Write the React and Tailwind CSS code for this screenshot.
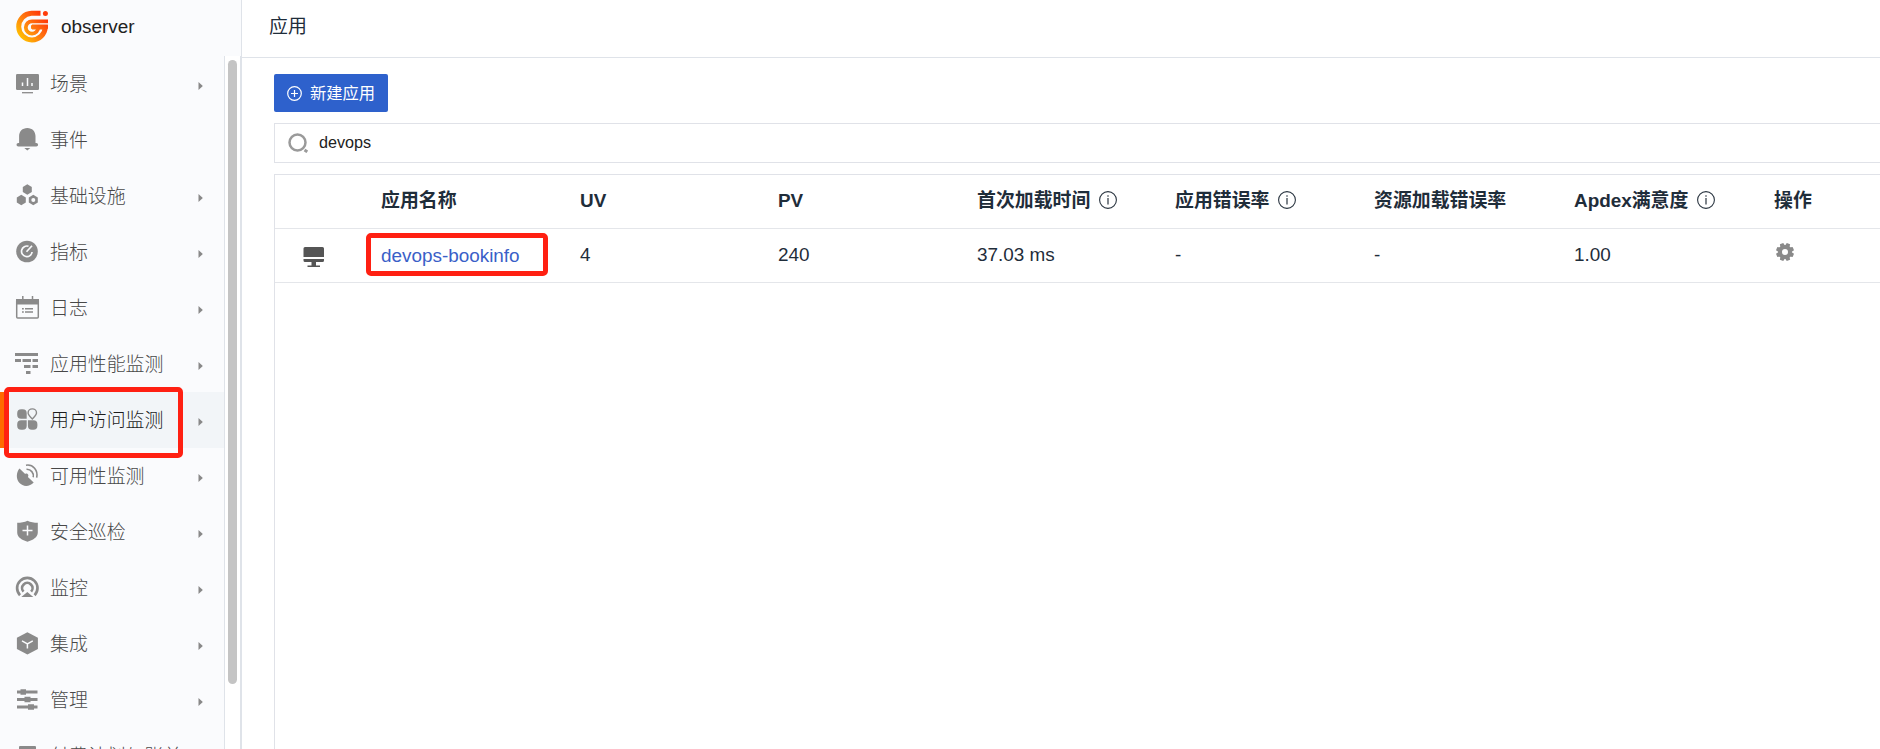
import React from "react";

const G = "#8a8a8a";
const BG = "#fafbfd";

const hex = (cx, cy, r) =>
  [0, 1, 2, 3, 4, 5]
    .map((i) => {
      const a = (Math.PI / 3) * i - Math.PI / 2;
      return `${(cx + r * Math.cos(a)).toFixed(2)},${(cy + r * Math.sin(a)).toFixed(2)}`;
    })
    .join(" ");

const icons = {
  scene: (
    <>
      <rect x="1" y="2" width="23" height="16" rx="1.2" fill={G} />
      <path d="M7.500 14v-3.500M12.500 14V6M17 14v-3" stroke={BG} strokeWidth="1.500" />
      <path d="M7 20.700h11" stroke={G} strokeWidth="1.300" />
    </>
  ),
  bell: (
    <path
      fill={G}
      d="M12.300 0c5 0 8.200 3.600 8.200 8v7h.8a1.800 1.800 0 0 1 0 3.600H3.300a1.800 1.800 0 0 1 0-3.600h.8V8c0-4.400 3.200-8 8.200-8zM9.300 20h6l-3 2.600z"
    />
  ),
  infra: (
    <>
      <polygon points={hex(12.300, 5.500, 5.200)} fill={G} />
      <polygon points={hex(6.300, 16, 5.200)} fill={G} />
      <polygon points={hex(18.300, 16, 5.200)} fill={G} />
      <circle cx="18.300" cy="16" r="2" fill={BG} />
    </>
  ),
  metric: (
    <>
      <circle cx="12" cy="11.500" r="10.800" fill={G} />
      <path d="M13.500 6.300a5.300 5.300 0 1 0 3.600 5.700M11.500 11.800l5.500-6" fill="none" stroke={BG} strokeWidth="1.700" />
    </>
  ),
  log: (
    <>
      <rect x="1.700" y="3.700" width="21.600" height="18.300" rx="1" fill="none" stroke={G} strokeWidth="1.500" />
      <path d="M1 3h23v5.500H1z" fill={G} />
      <path d="M7.800 0v4M17.500 0v4" stroke={G} strokeWidth="1.500" />
      <path d="M7 12.800h1.800M10 12.800h8M7 16h1.800M10 16h8" stroke={G} strokeWidth="1.400" />
    </>
  ),
  apm: (
    <path
      fill={G}
      d="M0 1h23v3H0zM0 7h6v3H0zM7.500 7H16v3H7.500zM17.500 7H23v3h-5.500zM9 13h6.500v3H9zM17.500 13H23v3h-5.500zM11 19h4.500v3H11z"
    />
  ),
  rum: (
    <>
      <path
        fill={G}
        d="M11.700 10.800H6.200a4 4 0 0 1-4-4V5.200a4 4 0 0 1 4-4h1.500a4 4 0 0 1 4 4zM11.700 12.300v5.500a4 4 0 0 1-4 4H6.200a4 4 0 0 1-4-4v-1.500a4 4 0 0 1 4-4zM12.900 12.300h5.500a4 4 0 0 1 4 4v1.500a4 4 0 0 1-4 4h-1.500a4 4 0 0 1-4-4z"
      />
      <path
        d="M17.300.9c2.400 0 4.200 1.800 4.200 4 0 2-1.800 3.500-4.200 6-2.400-2.500-4.200-4-4.200-6 0-2.200 1.800-4 4.200-4z"
        fill="none"
        stroke={G}
        strokeWidth="1.400"
      />
    </>
  ),
  dish: (
    <>
      <path fill={G} d="M4.500 4.500l5.700 5.500c1.500-1.500 4.300.8 2.700 3l5.800 5.500C14.500 23 8 23 4.300 18.800 1 15 1 8.500 4.500 4.500z" />
      <path d="M11.500 5.300a6.500 6.500 0 0 1 6.700 8M11 1.200c7-1.200 12.300 5 10.700 12.500" fill="none" stroke={G} strokeWidth="1.600" />
    </>
  ),
  shield: (
    <>
      <path fill={G} d="M12.500.7c3 1.500 6.500 2 10.300 2v9.800c0 5-5 7.500-10.300 9.300C7.200 20 2.200 17.500 2.200 12.500V2.700C6 2.700 9.500 2.200 12.500.7z" />
      <path d="M12.500 5.500v10M7.500 10.500h10" stroke={BG} strokeWidth="1.500" />
    </>
  ),
  monitor: (
    <>
      <path d="M5 19.200a10.200 10.200 0 1 1 14.600 0" fill="none" stroke={G} strokeWidth="2.700" />
      <path d="M8.500 15.700a5.200 5.200 0 1 1 7.600 0" fill="none" stroke={G} strokeWidth="2.700" />
      <path d="M12.300 16l6 5H6.300z" fill={G} />
    </>
  ),
  cube: (
    <>
      <polygon points="12.400,0.300 22.900,5.700 22.900,17 12.400,22.500 1.900,17 1.900,5.700" fill={G} />
      <path d="M7 8.800l5.400 3 5.400-3M12.400 11.800v4.700" fill="none" stroke={BG} strokeWidth="1.500" />
    </>
  ),
  manage: (
    <>
      <path d="M2 4h20.500M2 11.500h20.500M2 19h20.500" stroke={G} strokeWidth="3" />
      <path d="M5.500 1.200h5.500v5.600H5.500zM9.500 8.700h6v5.600h-6zM13 16.200h6v5.600h-6z" fill={G} />
    </>
  ),
  bill: <path d="M5 2h15a1 1 0 0 1 1 1v18H4V3a1 1 0 0 1 1-1z" fill={G} />,
};

const menu = [
  ["scene", "场景", true],
  ["bell", "事件", false],
  ["infra", "基础设施", true],
  ["metric", "指标", true],
  ["log", "日志", true],
  ["apm", "应用性能监测", true],
  ["rum", "用户访问监测", true],
  ["dish", "可用性监测", true],
  ["shield", "安全巡检", true],
  ["monitor", "监控", true],
  ["cube", "集成", true],
  ["manage", "管理", true],
  ["bill", "付费计划与账单", false],
];

function Logo() {
  return (
    <svg className="h-[34px] w-[34px]" viewBox="0 0 34 34" fill="none">
      <defs>
        <linearGradient id="lg" x1="4" y1="29" x2="30" y2="6" gradientUnits="userSpaceOnUse">
          <stop stopColor="#ffc800" />
          <stop offset="0.500" stopColor="#ff7a10" />
          <stop offset="1" stopColor="#ff3408" />
        </linearGradient>
      </defs>
      <path d="M25.500 3.300H16.500a13.300 13.300 0 1 0 13.800 13.700H17" stroke="url(#lg)" strokeWidth="5" />
      <path d="M33 11.300H17a6.200 6.200 0 1 0 6.200 6" stroke="url(#lg)" strokeWidth="3.800" />
      <path d="M16 17h17" stroke="url(#lg)" strokeWidth="3.600" />
      <circle cx="30.400" cy="3.400" r="2.500" fill="#ff3c0a" />
    </svg>
  );
}

function Info() {
  return (
    <svg className="mb-[2px] ml-[9px] h-[18px] w-[18px]" viewBox="0 0 18 18" fill="none">
      <circle cx="9" cy="9" r="8.400" stroke="#2a3540" strokeWidth="1.100" />
      <path d="M9 7v6.500M9 4.200v1.500" stroke="#2a3540" strokeWidth="1.200" />
    </svg>
  );
}

function Gear() {
  const teeth = [0, 45, 90, 135, 180, 225, 270, 315];
  return (
    <svg className="mb-[8px] ml-[2px] h-[18px] w-[18px]" viewBox="0 0 18 18">
      {teeth.map((a) => (
        <path key={a} d="M6.500 3.500 7.200 0h3.600l.7 3.500z" fill="#8a8a8a" transform={`rotate(${a + 22.5} 9 9)`} />
      ))}
      <circle cx="9" cy="9" r="5" fill="none" stroke="#8a8a8a" strokeWidth="4" />
    </svg>
  );
}

const cols = [
  ["UV", "4", false],
  ["PV", "240", false],
  ["首次加载时间", "37.03 ms", true],
  ["应用错误率", "-", true],
  ["资源加载错误率", "-", false],
  ["Apdex满意度", "1.00", true],
];

const grid =
  "grid grid-cols-[106px_199px_198px_199px_198px_199px_200px_200px_1fr] items-center border-b border-[#e4e6ea]";

export default function App() {
  return (
    <div className="flex h-[749px] w-[1880px] overflow-hidden bg-white font-['Liberation_Sans','Noto_Sans_CJK_SC',sans-serif] text-[18.9px] text-[#1f2d3a]">
      <aside className="flex w-[242px] shrink-0 flex-col">
        <div className="flex h-[56px] items-center border-r border-[#dfe3e9] bg-[#fafbfd] pb-[2px] pl-[15px]">
          <Logo />
          <span className="ml-[12px] text-[#222]">observer</span>
        </div>
        <div className="flex min-h-0 flex-1 border-r-2 border-[#dfe3e9]">
          <nav className="w-[225px] overflow-hidden border-r border-[#dfe3e9] bg-[#fafbfd]">
            {menu.map(([icon, label, arrow]) => {
              const active = icon === "rum";
              return (
                <div
                  key={icon}
                  className={
                    active
                      ? "relative flex h-[56px] items-center border-l-4 border-[#ff6a00] bg-[#f2f5f8] pl-[11px] text-[#1c1c1c]"
                      : "flex h-[56px] items-center pl-[15px] text-[#484848]"
                  }
                >
                  <svg className="h-[24px] w-[24px] overflow-visible" viewBox="0 0 24 24">
                    {icons[icon]}
                  </svg>
                  <span className="mt-[2px] ml-[11px] font-light whitespace-nowrap">{label}</span>
                  {arrow && (
                    <svg className="mt-[4px] mr-[21px] ml-auto h-[8px] w-[5px]" viewBox="0 0 5 8">
                      <path d="M0.500 0l4.300 4-4.300 4z" fill="#888" />
                    </svg>
                  )}
                  {active && (
                    <div className="absolute -top-[5px] left-0 h-[71px] w-[179px] rounded-[5px] border-[5px] border-[#ff2012]" />
                  )}
                </div>
              );
            })}
          </nav>
          <div className="flex-1 bg-white pt-[4px] pl-[3px]">
            <div className="h-[624px] w-[9px] rounded-full bg-[#c4c4c4]" />
          </div>
        </div>
      </aside>

      <main className="flex min-w-0 flex-1 flex-col">
        <header className="flex h-[58px] shrink-0 items-center border-b border-[#dfe3e9] pb-[3px] pl-[27px]">应用</header>
        <div className="flex min-h-0 flex-1 flex-col pt-[16px] pl-[32px]">
          <button className="flex h-[38px] w-[114px] shrink-0 items-center rounded-[2px] bg-[#2e61cc] pl-[13px] text-[16.3px] text-white">
            <svg className="mr-[8px] h-[15px] w-[15px]" viewBox="0 0 15 15" fill="none" stroke="#fff" strokeWidth="1.200">
              <circle cx="7.500" cy="7.500" r="6.800" />
              <path d="M7.500 4v7M4 7.500h7" />
            </svg>
            新建应用
          </button>
          <div className="mt-[11px] flex h-[40px] shrink-0 items-center border border-r-0 border-[#e0e2e8] pb-[1px] pl-[13px] text-[16.200px] text-[#222]">
            <svg className="mr-[11px] h-[20px] w-[20px]" viewBox="0 0 20 20" fill="none" stroke="#9a9a9a">
              <circle cx="9.500" cy="9.500" r="8" strokeWidth="2.500" />
              <path d="M16.500 17l2.800 1.800" strokeWidth="3" />
            </svg>
            devops
          </div>
          <div className="mt-[11px] min-h-0 flex-1 border-t border-l border-[#e0e2e8]">
            <div className={`${grid} h-[54px] font-bold`}>
              <span />
              <span>应用名称</span>
              {cols.map(([h, , info]) => (
                <span key={h} className="flex items-center whitespace-nowrap">
                  {h}
                  {info && <Info />}
                </span>
              ))}
              <span>操作</span>
            </div>
            <div className={`${grid} h-[54px]`}>
              <svg className="mt-[3px] ml-[28px] h-[21px] w-[22px]" viewBox="0 0 22 21" fill="#555">
                <path d="M2 0h17.500a1.500 1.500 0 0 1 1.500 1.500V10H.5V1.500A1.500 1.500 0 0 1 2 0zM.5 12H21v1.500a1.500 1.500 0 0 1-1.500 1.500H13v3.500h4V20H4.500v-1.500h4V15H2a1.500 1.500 0 0 1-1.500-1.500z" />
              </svg>
              <span className="relative mt-[2px] text-[#3a5fc8]">
                devops-bookinfo
                <span className="absolute -top-[9px] -left-[15px] h-[43px] w-[182px] rounded-[5px] border-[5px] border-[#ff2012]" />
              </span>
              {cols.map(([h, v]) => (
                <span key={h}>{v}</span>
              ))}
              <Gear />
            </div>
          </div>
        </div>
      </main>
    </div>
  );
}
